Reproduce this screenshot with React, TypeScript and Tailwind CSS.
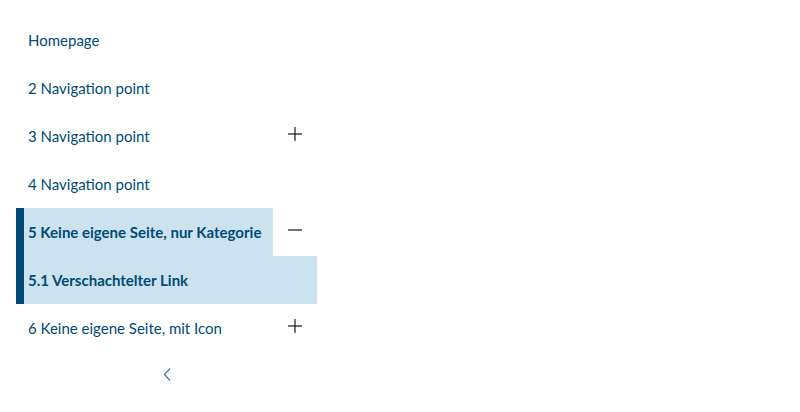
import React from 'react';

type NavItem = {
  label: string;
  toggle?: 'plus' | 'minus';
  active?: boolean;
  children?: string[];
};

const items: NavItem[] = [
  { label: 'Homepage' },
  { label: '2 Navigation point' },
  { label: '3 Navigation point', toggle: 'plus' },
  { label: '4 Navigation point' },
  { label: '5 Keine eigene Seite, nur Kategorie', toggle: 'minus', active: true, children: ['5.1 Verschachtelter Link'] },
  { label: '6 Keine eigene Seite, mit Icon', toggle: 'plus' },
];

function ToggleIcon({ kind }: { kind: 'plus' | 'minus' }) {
  return (
    <svg width="14" height="14" viewBox="0 0 14 14" fill="none" stroke="#1a1a1a" strokeWidth="1.2">
      <path d="M0 7h14" />
      {kind === 'plus' && <path d="M7 0v14" />}
    </svg>
  );
}

export default function App() {
  return (
    <div className="min-h-[412px] w-[800px] bg-white pt-4 pl-4 text-[15px] text-[#004b76]" style={{ fontFamily: 'Lato, "Noto Sans", sans-serif' }}>
      <nav className="w-[301px]">
        <ul>
          {items.map((item) => (
            <li key={item.label}>
              <div className={`flex h-12 ${item.active ? 'border-l-8 border-[#004b76]' : ''}`}>
                <a
                  className={`flex flex-1 items-center whitespace-nowrap ${item.active ? 'bg-[#cce3ef] pl-1 font-bold' : 'pl-3'}`}
                >
                  {item.label}
                </a>
                {item.toggle && (
                  <button className="flex w-11 shrink-0 items-center justify-center pb-[5px]">
                    <ToggleIcon kind={item.toggle} />
                  </button>
                )}
              </div>
              {item.children && (
                <ul className="border-l-8 border-[#004b76] bg-[#cce3ef]">
                  {item.children.map((c) => (
                    <li key={c} className="flex h-12 items-center pl-1 font-bold">
                      {c}
                    </li>
                  ))}
                </ul>
              )}
            </li>
          ))}
        </ul>
        <div className="flex h-11 items-center justify-center">
          <svg width="8" height="13" viewBox="0 0 8 13" fill="none" stroke="#3b7fb0" strokeWidth="1.3">
            <path d="M7 0.5L1.5 6.5L7 12.5" />
          </svg>
        </div>
      </nav>
    </div>
  );
}
